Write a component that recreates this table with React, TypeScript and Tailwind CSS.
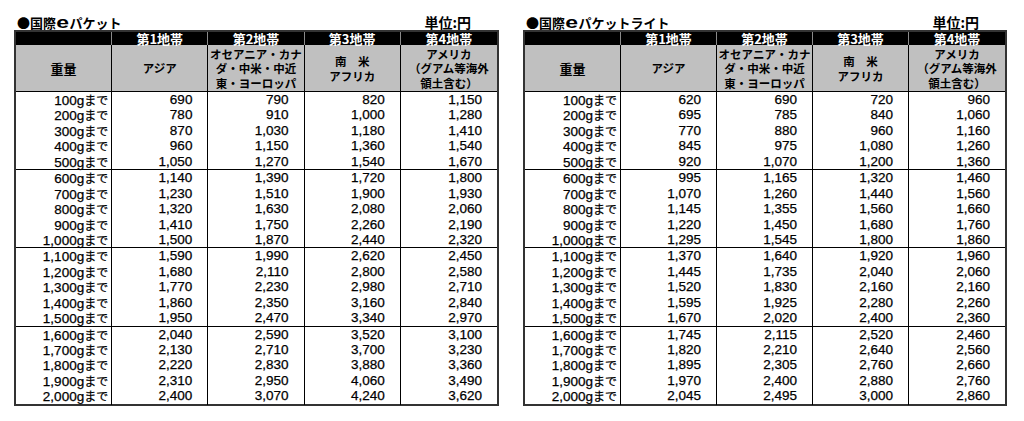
import React from "react";

type Row = [number, string, string, string, string];

const leftData: Row[] = [
  [100, "690", "790", "820", "1,150"],
  [200, "780", "910", "1,000", "1,280"],
  [300, "870", "1,030", "1,180", "1,410"],
  [400, "960", "1,150", "1,360", "1,540"],
  [500, "1,050", "1,270", "1,540", "1,670"],
  [600, "1,140", "1,390", "1,720", "1,800"],
  [700, "1,230", "1,510", "1,900", "1,930"],
  [800, "1,320", "1,630", "2,080", "2,060"],
  [900, "1,410", "1,750", "2,260", "2,190"],
  [1000, "1,500", "1,870", "2,440", "2,320"],
  [1100, "1,590", "1,990", "2,620", "2,450"],
  [1200, "1,680", "2,110", "2,800", "2,580"],
  [1300, "1,770", "2,230", "2,980", "2,710"],
  [1400, "1,860", "2,350", "3,160", "2,840"],
  [1500, "1,950", "2,470", "3,340", "2,970"],
  [1600, "2,040", "2,590", "3,520", "3,100"],
  [1700, "2,130", "2,710", "3,700", "3,230"],
  [1800, "2,220", "2,830", "3,880", "3,360"],
  [1900, "2,310", "2,950", "4,060", "3,490"],
  [2000, "2,400", "3,070", "4,240", "3,620"],
];

const rightData: Row[] = [
  [100, "620", "690", "720", "960"],
  [200, "695", "785", "840", "1,060"],
  [300, "770", "880", "960", "1,160"],
  [400, "845", "975", "1,080", "1,260"],
  [500, "920", "1,070", "1,200", "1,360"],
  [600, "995", "1,165", "1,320", "1,460"],
  [700, "1,070", "1,260", "1,440", "1,560"],
  [800, "1,145", "1,355", "1,560", "1,660"],
  [900, "1,220", "1,450", "1,680", "1,760"],
  [1000, "1,295", "1,545", "1,800", "1,860"],
  [1100, "1,370", "1,640", "1,920", "1,960"],
  [1200, "1,445", "1,735", "2,040", "2,060"],
  [1300, "1,520", "1,830", "2,160", "2,160"],
  [1400, "1,595", "1,925", "2,280", "2,260"],
  [1500, "1,670", "2,020", "2,400", "2,360"],
  [1600, "1,745", "2,115", "2,520", "2,460"],
  [1700, "1,820", "2,210", "2,640", "2,560"],
  [1800, "1,895", "2,305", "2,760", "2,660"],
  [1900, "1,970", "2,400", "2,880", "2,760"],
  [2000, "2,045", "2,495", "3,000", "2,860"],
];

const grayHeaders: string[][] = [
  ["アジア"],
  ["オセアニア・カナ", "ダ・中米・中近", "東・ヨーロッパ"],
  ["南　米", "アフリカ"],
  ["アメリカ", "（グアム等海外", "領土含む）"],
];

function PriceTable({ name, rows, width }: { name: string; rows: Row[]; width: string }) {
  const groups: Row[][] = [rows.slice(0, 5), rows.slice(5, 10), rows.slice(10, 15), rows.slice(15, 20)];
  return (
    <div className={width}>
      <div className="h-[16px] flex items-end justify-between font-['Noto_Sans_CJK_JP',sans-serif] font-bold text-black">
        <div className="pl-[3px] text-[13px] leading-[14px] flex items-end whitespace-nowrap">
          <span>●国際</span>
          <span className="inline-block text-[17px] leading-[14px] scale-x-[1.35] mx-[2px] font-['Liberation_Sans',sans-serif]">e</span>
          <span>{name}</span>
        </div>
        <div className="pr-[28px] text-[14px] leading-[15px]">単位:円</div>
      </div>
      <div className="border-2 border-[#333333] bg-white">
        <div className="grid grid-cols-5 h-[13px] bg-black text-white text-[13px] leading-[13px] font-bold font-['Noto_Sans_CJK_JP',sans-serif]">
          <div className="border-r border-[#8a8a8a]"></div>
          <div className="border-r border-[#8a8a8a] text-center">第1地帯</div>
          <div className="border-r border-[#8a8a8a] text-center">第2地帯</div>
          <div className="border-r border-[#8a8a8a] text-center">第3地帯</div>
          <div className="text-center">第4地帯</div>
        </div>
        <div className="grid grid-cols-5 h-[47px] bg-[#c0c0c0] border-b border-black font-bold text-black font-['Noto_Sans_CJK_JP',sans-serif]">
          <div className="border-r border-black flex items-center justify-center text-[13px] leading-[15px]">重量</div>
          {grayHeaders.map((lines, i) => (
            <div
              key={i}
              className={`${i < 3 ? "border-r border-black" : ""} flex flex-col items-center justify-center pt-[1px] text-[11.5px] leading-[14.5px] whitespace-nowrap`}
            >
              {lines.map((l) => (
                <div key={l} className="h-[14.5px] leading-[14.5px]">{l}</div>
              ))}
            </div>
          ))}
        </div>
        {groups.map((g, gi) => (
          <div key={gi} className={gi < 3 ? "border-b border-black" : ""}>
            {g.map((r) => (
              <div
                key={r[0]}
                className="grid grid-cols-5 h-[15.45px] text-[13.5px] leading-[15.45px] text-black [-webkit-text-stroke:0.25px_black] font-['Liberation_Sans','Noto_Sans_CJK_JP',sans-serif]"
              >
                <div className="border-r border-black text-right pr-[3px] whitespace-nowrap">
                  {r[0].toLocaleString("en-US")}g
                  <span className="text-[12px] font-['Noto_Sans_CJK_JP',sans-serif]">まで</span>
                </div>
                <div className="border-r border-black text-right pr-[15px]">{r[1]}</div>
                <div className="border-r border-black text-right pr-[15px]">{r[2]}</div>
                <div className="border-r border-black text-right pr-[15px]">{r[3]}</div>
                <div className="text-right pr-[15px]">{r[4]}</div>
              </div>
            ))}
          </div>
        ))}
      </div>
    </div>
  );
}

export default function App() {
  return (
    <div className="w-[1024px] h-[421px] bg-white pt-[14px] pl-[14px] flex gap-[24px]">
      <PriceTable name="パケット" rows={leftData} width="w-[485px]" />
      <PriceTable name="パケットライト" rows={rightData} width="w-[484px]" />
    </div>
  );
}
